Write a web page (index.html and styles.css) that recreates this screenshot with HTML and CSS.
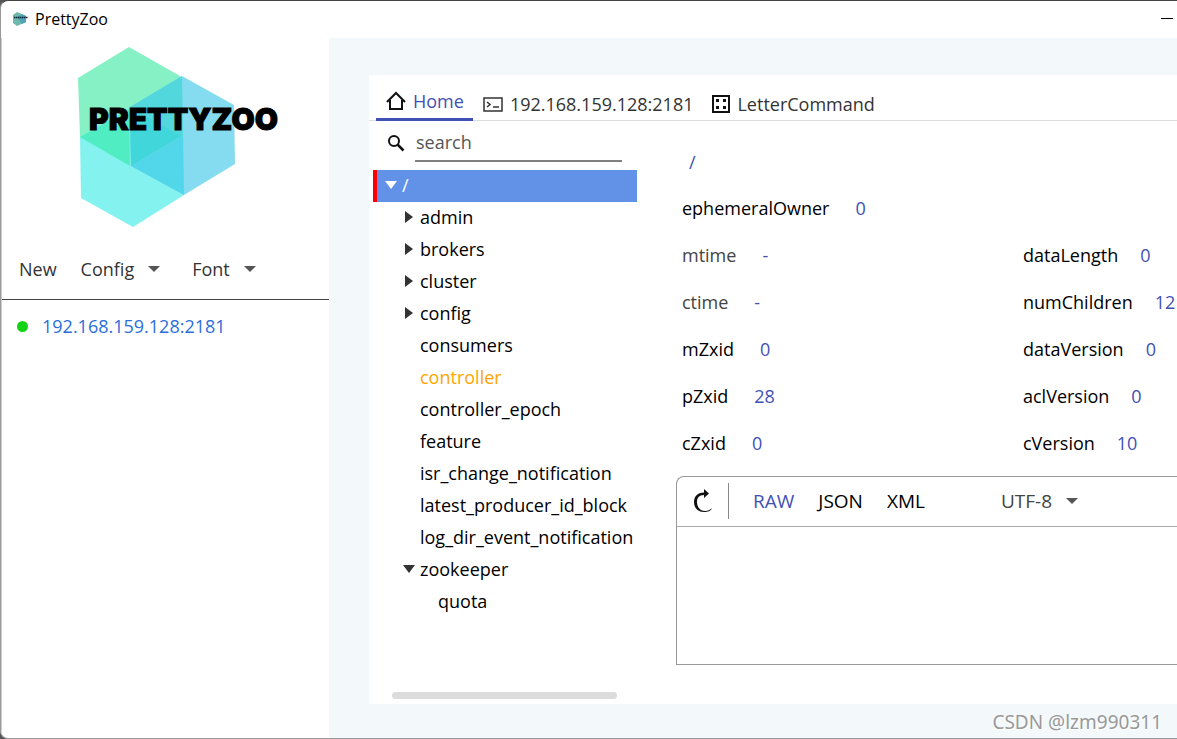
FILE: index.html
```
<!DOCTYPE html>
<html lang="en">
<head>
<meta charset="utf-8">
<title>PrettyZoo</title>
<link rel="stylesheet" href="styles.css">
</head>
<body>
<div class="window">
  <header class="titlebar">
    <svg class="app-icon" viewBox="0 0 17 16" aria-hidden="true">
      <path d="M1 4 5 1l9 4v6l-9 4-4-3z" fill="#6fb8ac"/>
      <path d="M5 6l5-3 4 2v6l-4 2z" fill="#4fa3b8"/>
      <path d="M2 6.500h14" stroke="#123" stroke-width="1.500" stroke-dasharray="1.500 .5"/>
    </svg>
    <span class="app-title">PrettyZoo</span>
    <button class="minimize" aria-label="Minimize"></button>
  </header>
  <div class="workspace">
    <aside class="sidebar">
      <svg class="logo" viewBox="0 0 204 184" role="img" aria-label="PrettyZoo">
        <path d="M54 2 105 31 106 91 54 121 5 92 3 33z" fill="#85f1c5"/>
        <path d="M5 92 54 63 106 92 109 150 58 182 6 153z" fill="#84f2ef"/>
        <path d="M107 31 159 60 160 119 109 150 56 121 55 62z" fill="#85dcf0"/>
        <path d="M5 92 54 64 55 121z" fill="#50edc3"/>
        <path d="M55 62 107 31 108 91 56 121z" fill="#52d8dc"/>
        <path d="M56 121 108 91 109 150z" fill="#52d7ea"/>
        <path d="M55 63 106 91 56 121z" fill="#40d6da"/>
        <text class="logo-text" x="14" y="85">PRETTYZOO</text>
      </svg>
      <nav class="menu">
        <button>New</button>
        <button class="menu-config">Config <i class="caret"></i></button>
        <button>Font <i class="caret"></i></button>
      </nav>
      <ul class="servers">
        <li><i class="status"></i><a href="#server">192.168.159.128:2181</a></li>
      </ul>
    </aside>
    <main class="content">
      <section class="panel">
        <nav class="tabs">
          <button class="tab active">
            <svg width="20" height="20" viewBox="0 0 20 20" fill="none" stroke="#111" stroke-width="2"><path d="M1 11 10 2l9 9M4 9v9h12V9"/></svg>
            Home
          </button>
          <button class="tab">
            <svg width="20" height="20" viewBox="0 0 20 20" fill="none" stroke="#333"><rect x="1" y="4" width="18" height="13" stroke-width="1.500"/><path d="m4 8 3 2.500L4 13M10 13h6" stroke-width="1.500"/></svg>
            192.168.159.128:2181
          </button>
          <button class="tab tab-command">
            <svg width="18" height="18" viewBox="0 0 18 18"><rect x="1" y="1" width="16" height="16" fill="none" stroke="#111" stroke-width="2"/><path d="M4 4h3v3H4zM11 4h3v3h-3zM4 11h3v3H4zM11 11h3v3h-3z" fill="#111"/></svg>
            LetterCommand
          </button>
        </nav>
        <div class="columns">
          <div class="browser">
            <label class="search">
              <svg width="18" height="18" viewBox="0 0 18 18" fill="none" stroke="#111" aria-hidden="true"><circle cx="7" cy="7" r="5" stroke-width="2"/><path d="m10.500 10.500 6 6" stroke-width="2.500"/></svg>
              <input type="text" placeholder="search" aria-label="search">
            </label>
            <ul class="tree">
              <li class="node root"><i class="arrow down"></i>/</li>
              <li class="node"><i class="arrow"></i>admin</li>
              <li class="node"><i class="arrow"></i>brokers</li>
              <li class="node"><i class="arrow"></i>cluster</li>
              <li class="node"><i class="arrow"></i>config</li>
              <li class="node leaf">consumers</li>
              <li class="node leaf ephemeral">controller</li>
              <li class="node leaf">controller_epoch</li>
              <li class="node leaf">feature</li>
              <li class="node leaf">isr_change_notification</li>
              <li class="node leaf">latest_producer_id_block</li>
              <li class="node leaf">log_dir_event_notification</li>
              <li class="node"><i class="arrow down"></i>zookeeper</li>
              <li class="node leaf nested">quota</li>
            </ul>
            <div class="scrollbar"></div>
          </div>
          <div class="detail">
            <div class="path">/</div>
            <div class="stats">
              <dl>
                <div><dt>ephemeralOwner</dt><dd>0</dd></div>
                <div class="time"><dt>mtime</dt><dd>-</dd></div>
                <div class="time"><dt>ctime</dt><dd>-</dd></div>
                <div><dt>mZxid</dt><dd>0</dd></div>
                <div><dt>pZxid</dt><dd>28</dd></div>
                <div><dt>cZxid</dt><dd>0</dd></div>
              </dl>
              <dl class="versions">
                <div><dt>dataLength</dt><dd>0</dd></div>
                <div><dt>numChildren</dt><dd>12</dd></div>
                <div><dt>dataVersion</dt><dd>0</dd></div>
                <div><dt>aclVersion</dt><dd>0</dd></div>
                <div><dt>cVersion</dt><dd>10</dd></div>
              </dl>
            </div>
            <div class="editor">
              <div class="toolbar">
                <button class="reload" aria-label="Reload">
                  <svg width="20" height="24" viewBox="0 0 20 24"><path d="M11 3.500C4 3.500 1 8 1 13c0 6 4 10 10 10 4 0 7-1 8-4-2 2-4 3-7 3-5 0-8-4-8-9 0-4 2-7 7-7v3l5-4.500L11 0z" fill="#111"/></svg>
                </button>
                <button class="format selected">RAW</button>
                <button class="format">JSON</button>
                <button class="format">XML</button>
                <button class="charset">UTF-8 <i class="caret"></i></button>
              </div>
              <textarea aria-label="Node data"></textarea>
            </div>
          </div>
        </div>
      </section>
    </main>
  </div>
  <div class="watermark">CSDN @lzm990311</div>
</div>
</body>
</html>
```

FILE: styles.css
```
* { box-sizing: border-box; }

body {
  margin: 0;
  background: #55555a;
  font: 18px/24px "Open Sans", "Noto Sans", sans-serif;
  color: #000;
}

button, input, textarea { font: inherit; color: inherit; }
button { display: flex; align-items: center; padding: 0; border: 0; background: none; white-space: nowrap; }
ul, dl, dd { margin: 0; padding: 0; list-style: none; }

.window {
  position: relative;
  display: flex;
  flex-direction: column;
  min-height: 100vh;
  overflow: hidden;
  border: 1px solid #999;
  border-top-color: #444;
  border-right: 0;
  border-radius: 8px 0 0 8px;
  background: #fff;
}

.titlebar { display: flex; align-items: center; height: 37px; padding: 0 4px 2px 11px; font-size: 16px; }
.app-icon { width: 17px; height: 16px; margin-right: 6px; }
.minimize { width: 12px; height: 1px; margin-left: auto; background: #000; }

.workspace { display: flex; flex: 1; }

.sidebar { flex: none; width: 328px; border-left: 1px solid #ccc; }
.logo { display: block; width: 204px; height: 184px; margin: 7px 0 0 73px; }
.logo-text { font: 900 30px Inter, sans-serif; stroke: #000; stroke-width: 1px; }

.menu { display: flex; height: 71px; padding: 12px 17px 0; border-bottom: 1px solid #444; color: #333; }
.menu button { height: 56px; }
.menu button + button { margin-left: 24px; }
.menu .menu-config + button { margin-left: 32px; }
.caret { margin-left: 14px; border: 6px solid transparent; border-top-color: #555; border-bottom: 0; }

.servers li { display: flex; align-items: center; height: 54px; padding: 0 0 2px 15px; }
.servers a { color: #2c6fdb; text-decoration: none; }
.status { width: 11px; height: 11px; margin-right: 14px; border-radius: 50%; background: #14d314; }

.content { display: flex; flex: 1; min-width: 0; padding: 37px 0 34px 40px; background: #f3f8fb; }
.panel { display: flex; flex: 1; flex-direction: column; min-width: 0; background: #fff; }

.tabs { display: flex; height: 46px; padding-left: 7px; border-bottom: 1px solid #ddd; color: #333; }
.tab { gap: 7px; height: 46px; margin-right: 10px; padding-top: 12px; }
.tab.active { padding: 9px 9px 0 10px; border-bottom: 3px solid #3f51b5; color: #3f51b5; }
.tab-command { margin-left: 9px; }

.columns { display: flex; flex: 1; min-width: 0; }
.browser { display: flex; flex: none; flex-direction: column; width: 268px; padding-left: 4px; }
.search { display: flex; align-items: center; gap: 10px; height: 49px; padding: 0 15px 6px 14px; }
.search input { flex: 1; min-width: 0; height: 39px; padding: 0 1px; border: 0; border-bottom: 2px solid #808080; outline: 0; background: none; }
.search input::placeholder { color: #555; opacity: 1; }

.node { display: flex; align-items: center; height: 32px; padding: 0 0 2px 31px; white-space: nowrap; }
.node.root { padding-left: 9px; border-left: 4px solid #f00; background: #6192e8; color: #fff; }
.node.leaf { padding-left: 47px; }
.node.nested { padding-left: 65px; }
.node.ephemeral { color: #ffa500; }
.arrow { width: 8px; margin-left: 1px; margin-right: 7px; border: 6px solid transparent; border-left: 8px solid #333; border-right: 0; }
.arrow.down { width: 12px; margin-right: 5px; margin-left: -1px; border: 6px solid transparent; border-top: 8px solid #333; border-bottom: 0; }
.root .arrow.down { border-top-color: #fff; }
.scrollbar { height: 7px; margin: auto 20px 5px 19px; border-radius: 4px; background: #dcdcdc; }

.detail { display: flex; flex: 1; flex-direction: column; min-width: 0; padding: 18px 0 39px 39px; }
.path { padding: 11px 13px 12px; color: #3f51b5; }
.stats { display: grid; grid-template-columns: 341px 1fr; padding-left: 6px; }
.stats dl > div { display: flex; align-items: center; gap: 26px; height: 47px; padding-bottom: 3px; white-space: nowrap; }
.stats .versions { padding-top: 47px; }
.stats .versions > div { gap: 22px; }
.stats .time { color: #444; }
.stats dd { color: #3f51b5; }

.editor { display: flex; flex: 1; flex-direction: column; margin-top: 8px; border: 1px solid #999; border-right: 0; border-radius: 8px 0 0 0; }
.toolbar { display: flex; align-items: center; height: 50px; padding-bottom: 1px; border-bottom: 1px solid #aaa; font-size: 19px; }
.reload { height: 36px; padding: 0 15px 0 16px; border-right: 1px solid #888; }
.format { margin-left: 24px; }
.selected { color: #3f51b5; }
.charset { margin-left: 76px; color: #444; }
.editor textarea { flex: 1; width: 100%; border: 0; outline: 0; resize: none; background: none; }

.watermark { position: absolute; right: 15px; bottom: 4px; color: #999; font-family: "Noto Sans", sans-serif; font-size: 19px; text-shadow: 1px 1px #fff; }
```
